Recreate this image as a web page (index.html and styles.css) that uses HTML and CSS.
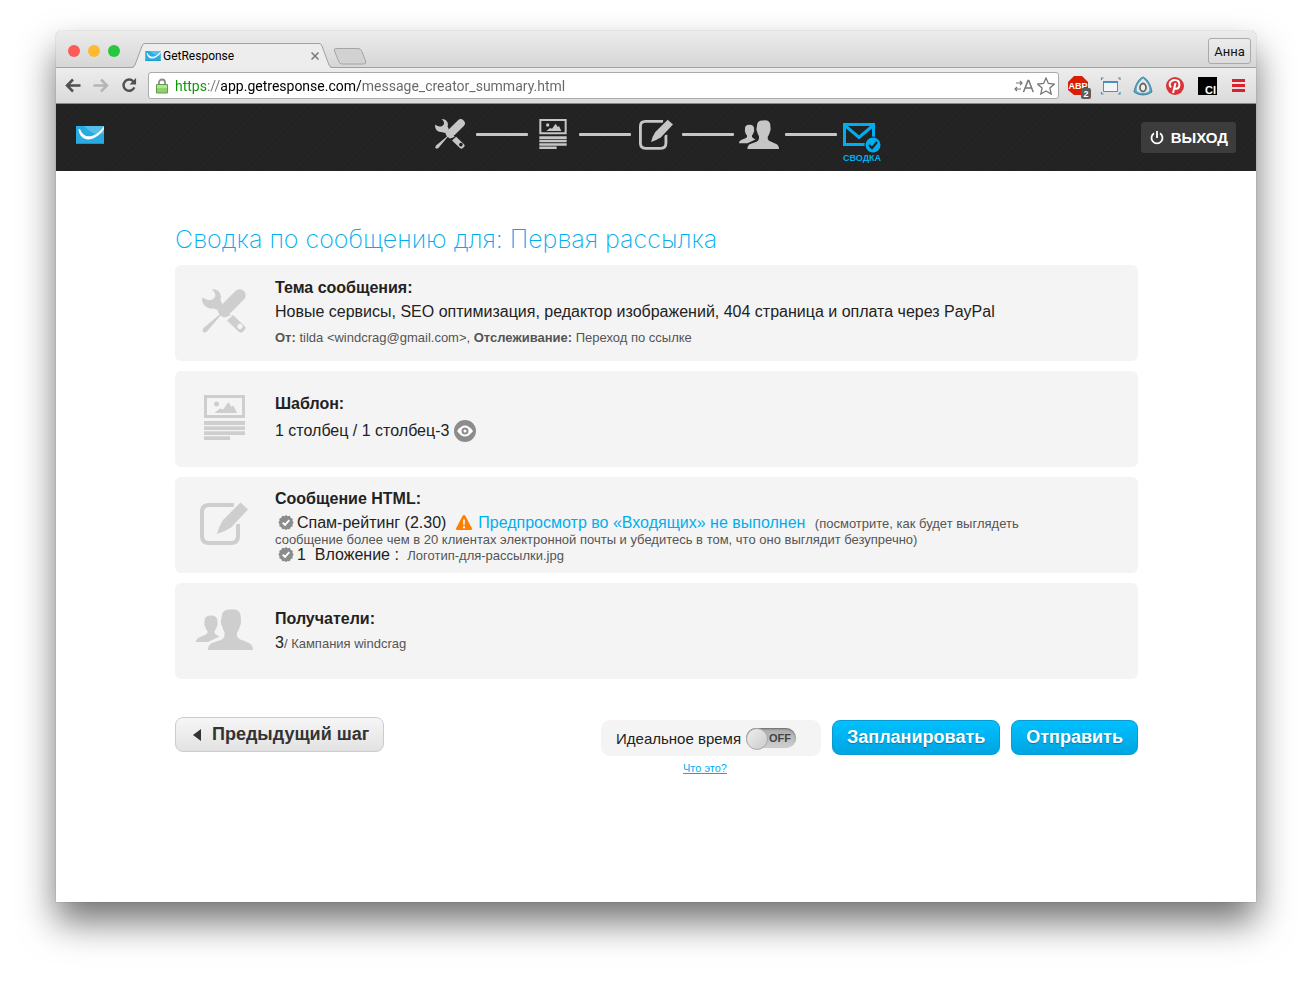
FILE: index.html
```html
<!DOCTYPE html>
<html lang="ru">
<head>
    <meta charset="UTF-8">
    <meta name="viewport" content="width=device-width, initial-scale=1.0">
    <title>GetResponse</title>
    <link rel="stylesheet" href="styles.css">
</head>
<body>
    <!-- shared icons -->
    <svg class="sprite" aria-hidden="true">
        <symbol id="tools" viewBox="0 0 44 44">
            <path fill="currentColor" d="M9.500.3C12.500 2.500 14.500 5.500 12.500 8.500 10 12 6 11.800.3 8.500-1 14.500 4 20 11.500 19.500L15.500 21 20.500 15.500 18.500 11C20.500 4 15.500-.5 9.500.3z"/>
            <path fill="none" stroke="currentColor" stroke-width="12" stroke-linecap="round" d="M37.700 6.300 25 19"/>
            <path fill="currentColor" d="M18 15 29 26 25.500 27.500 22 28.500 18.500 26.500 5 42.500 2.500 43.800.2 42 1.500 39 17.500 25.500 15.500 22z"/>
            <path fill="currentColor" fill-rule="evenodd" d="M31 26 42.500 37Q44.500 39 42.500 41L40.500 43Q38.500 44.500 36.500 42.500L25 31.500zM38 34.800a2.700 2.700 0 1 0 .01 0z"/>
        </symbol>
        <symbol id="template" viewBox="0 0 41 45">
            <path fill="none" stroke="currentColor" stroke-width="3" d="M1.500 1.500h38v20h-38z"/>
            <circle cx="12.500" cy="9" r="2.500" fill="currentColor"/>
            <path fill="currentColor" d="M10.500 18 16 13.500 19 14.500 24.500 7 27.500 12 29.500 10.500 33 18zM0 26h41v4H0zM0 31.300h41v3.700H0zM0 36.300h41v3.700H0zM0 41.300h26v3.700H0z"/>
        </symbol>
        <symbol id="edit" viewBox="0 0 48 43">
            <path fill="none" stroke="currentColor" stroke-width="4" d="M34 3H9Q2 3 2 10v24q0 7 7 7h22q7 0 7-7V22"/>
            <path fill="currentColor" stroke="var(--icon-back)" stroke-width="4" paint-order="stroke" d="M40.500.5 48 7.500 31 25.500Q24.500 30 17 32 19 24 23 18z"/>
        </symbol>
        <symbol id="people" viewBox="0 0 57 41">
            <path fill="currentColor" d="M8.500 13Q8 6.500 14.500 6.500 22 6 21.500 13.500 22 16 20.500 18.500 19.500 21 18.500 22V24Q20 26 23.500 27.500L12 33H0Q0 30 3 28.500L10 25.500Q12 24.500 11.500 22 9.500 20 9 17.500 8 16 8.500 13z"/>
            <path fill="currentColor" stroke="var(--icon-back)" stroke-width="2" paint-order="stroke" d="M25.500 9Q25.500 0 34 .5 45.500-1 44.800 10 45.500 14 44 17 43 21 41 23.500V27Q42 30 46 31L53 34Q57 36 57 41H12Q12 36 16 34L25 31Q28.500 29 28.500 26V23Q26.500 20 26 17 24 14 25.500 9z"/>
        </symbol>
        <symbol id="badge" viewBox="0 0 16 16">
            <path fill="currentColor" d="M8 0 9.800 1.200 12 .9 13 2.900 15.100 4 15 6.200 16 8 15 9.900 15.100 12 13 13.100 12 15.100 9.800 14.800 8 16 6.200 14.800 4 15.100 3 13.100.9 12 1 9.900 0 8 1 6.200.9 4 3 2.900 4 .9 6.200 1.200z"/>
            <path fill="none" stroke="#fff" stroke-width="2" d="M4.500 8.200 7 10.500 11.500 5.500"/>
        </symbol>
        <symbol id="gr" viewBox="0 0 28 18">
            <path fill="#28abe2" d="M0 0h28v18H0z"/>
            <path fill="#55bfe9" d="M8 0h20v7Q20 12 8 0z"/>
            <path fill="#fff" d="M2.500 3.500Q3.500 2.500 4.500 4C8 12.500 18 13.500 28 .5V3C18 17.500 4 16 2.500 3.500z"/>
            <path fill="#1e93ca" d="M0 17h28v1H0z"/>
        </symbol>
    </svg>

    <div class="window">
        <div class="titlebar">
            <div class="lights">
                <span class="light red"></span>
                <span class="light yellow"></span>
                <span class="light green"></span>
            </div>
            <div class="tab">
                <svg class="tab-edge" viewBox="0 0 14 25"><path fill="#ededed" d="M0 25C3 25 3 24 4 22L11 3Q12 0 14 0V25z"/><path fill="none" stroke="#a0a0a0" d="M0 24.500Q3 24.500 4 22L11 3Q12 .5 14 .5"/></svg>
                <div class="tab-body">
                    <svg class="favicon"><use href="#gr"/></svg>
                    <span class="tab-title">GetResponse</span>
                    <button class="tab-close" aria-label="Закрыть вкладку"><svg viewBox="0 0 8 8"><path stroke="#777" stroke-width="1.500" d="M.5.5l7 7M7.500.5l-7 7"/></svg></button>
                </div>
                <svg class="tab-edge" viewBox="0 0 14 25"><path fill="#ededed" d="M14 25C11 25 11 24 10 22L3 3Q2 0 0 0V25z"/><path fill="none" stroke="#a0a0a0" d="M14 24.500Q11 24.500 10 22L3 3Q2 .5 0 .5"/></svg>
            </div>
            <button class="new-tab" aria-label="Новая вкладка"><svg viewBox="0 0 34 17"><path fill="#d2d2d2" stroke="#a5a5a5" d="M3 .5H25Q27.500.5 28.500 2.500L32.500 13Q33.500 16 31 16H9Q7 16 6 14L1.500 3Q.5.5 3 .5z"/></svg></button>
            <button class="profile">Анна</button>
        </div>

        <div class="toolbar">
            <button class="tool" aria-label="Назад"><svg viewBox="0 0 16 14"><path fill="none" stroke="#505050" stroke-width="2.500" d="M15.500 7H2M8 1 2 7l6 6"/></svg></button>
            <button class="tool" aria-label="Вперёд"><svg viewBox="0 0 16 14"><path fill="none" stroke="#b5b5b5" stroke-width="2.500" d="M.5 7H14M8 1l6 6-6 6"/></svg></button>
            <button class="tool" aria-label="Обновить"><svg viewBox="0 0 16 16"><path fill="none" stroke="#505050" stroke-width="2.600" d="M12.500 3.500A6 6 0 1 0 13.700 10"/><path fill="#505050" d="M15.500 0v7H8.500z"/></svg></button>
            <div class="address">
                <svg class="lock" viewBox="0 0 12 16"><path fill="none" stroke="#8b8b8b" stroke-width="1.800" d="M3 8V4.500a3 3 0 0 1 6 0V8"/><path fill="#8fd16b" stroke="#5f9e47" d="M.5 6.500h11v8.500H.5z"/><path fill="#b4e496" d="M1 7h10v3H1z"/></svg>
                <input class="url" type="text" aria-label="Адрес" value="https://app.getresponse.com/message_creator_summary.html">
                <svg class="translate" viewBox="0 0 20 14"><path fill="none" stroke="#777" stroke-width="1.200" d="M2 4h6M6 2l2 2-2 2M7 10H1M3 8l-2 2 2 2"/><path fill="none" stroke="#777" stroke-width="1.500" d="M9.500 13 14 1.500h.8L19.200 13M11 9h6.800"/></svg>
                <svg class="star" viewBox="0 0 18 18"><path fill="#fff" stroke="#777" stroke-width="1.300" d="M9 1l2.400 5.500 6 .6-4.500 4 1.300 5.900L9 14l-5.200 3 1.300-5.900-4.500-4 6-.6z"/></svg>
            </div>
            <div class="extensions">
                <svg class="ext" viewBox="0 0 24 24"><path fill="#d81e05" d="M7 2h8l6 6v8l-6 5H7l-6-5V8z"/><text class="abp" x="11" y="15">ABP</text><rect x="14" y="14" width="10" height="11" rx="2" fill="#5c5c5c"/><text class="count" x="19" y="23">2</text></svg>
                <svg class="ext" viewBox="0 0 24 24"><path fill="none" stroke="#4b8fbd" stroke-width="1.200" d="M2.500 6V4h2M19 4h2v2M2.500 18v2h2M19 20h2v-2"/><path fill="#f1f5f8" stroke="#4b8fbd" d="M4.500 7.500h14v10h-14z"/><path fill="#4b8fbd" d="M4 7h15v2H4z"/></svg>
                <svg class="ext" viewBox="0 0 24 24"><path fill="#59a8c4" stroke="#3d839e" d="M12 3C17 5 20 12 21 18Q17 21 12 21T3 18C4 12 7 5 12 3z"/><path fill="#ddd" stroke="#e8eef0" stroke-width="1.500" d="M12 5.500Q18 11 17.500 16.500 12 20 6.500 16.500 6 11 12 5.500z"/><ellipse cx="12" cy="13.500" rx="3" ry="4" fill="#eee" stroke="#666" stroke-width="1.800"/></svg>
                <svg class="ext" viewBox="0 0 24 24"><circle cx="12" cy="12" r="9" fill="#d9343a"/><path fill="none" stroke="#fff" stroke-width="2" d="M8 13.500C4.500 9 9 5.500 12.500 6 17.500 6.500 17.500 14 13.500 14.800Q12 15 11.200 13.500M12.500 9 10 19"/></svg>
                <svg class="ext" viewBox="0 0 24 24"><path d="M3 3h19v18H3z"/><text class="ci" x="10" y="20">CI</text></svg>
                <svg class="ext" viewBox="0 0 24 24"><path fill="#d9222c" d="M5 5h13v3H5zM5 10h13v3H5zM5 15h13v3H5z"/></svg>
            </div>
        </div>

        <header class="header">
            <a href="#" class="logo" aria-label="GetResponse"><svg><use href="#gr"/></svg></a>
            <nav class="steps" aria-label="Шаги">
                <a href="#" class="step" aria-label="Настройки"><svg class="i-tools"><use href="#tools"/></svg></a>
                <span class="line"></span>
                <a href="#" class="step" aria-label="Шаблон"><svg class="i-template"><use href="#template"/></svg></a>
                <span class="line"></span>
                <a href="#" class="step" aria-label="Сообщение"><svg class="i-edit"><use href="#edit"/></svg></a>
                <span class="line"></span>
                <a href="#" class="step" aria-label="Получатели"><svg class="i-people"><use href="#people"/></svg></a>
                <span class="line"></span>
                <a href="#" class="step active">
                    <svg class="i-mail" viewBox="0 0 38 30"><path fill="none" stroke="currentColor" stroke-width="3" d="M1.500 1.500h29v20h-29zM2 2.500l14 12 14-12"/><circle cx="30" cy="22" r="8.500" fill="#232323"/><circle cx="30" cy="22" r="7.500" fill="currentColor"/><path fill="none" stroke="#232323" stroke-width="2.200" d="M26 22l3 3 5-6"/></svg>
                    <span>СВОДКА</span>
                </a>
            </nav>
            <button class="logout"><svg viewBox="0 0 14 14"><path fill="none" stroke="#fff" stroke-width="1.800" d="M4 2.300a5.500 5.500 0 1 0 6 0M7 0v7"/></svg>ВЫХОД</button>
        </header>

        <main class="content">
            <h1>Сводка по сообщению для: Первая рассылка</h1>

            <section class="card">
                <div class="card-icon"><svg class="i-tools"><use href="#tools"/></svg></div>
                <div class="card-text">
                    <h2>Тема сообщения:</h2>
                    <p>Новые сервисы, SEO оптимизация, редактор изображений, 404 страница и оплата через PayPal</p>
                    <p class="details"><b>От:</b> tilda &lt;windcrag@gmail.com&gt;, <b>Отслеживание:</b> Переход по ссылке</p>
                </div>
            </section>

            <section class="card">
                <div class="card-icon"><svg class="i-template"><use href="#template"/></svg></div>
                <div class="card-text">
                    <h2>Шаблон:</h2>
                    <p class="template-name">1 столбец / 1 столбец-3
                        <button class="preview" aria-label="Предпросмотр"><svg viewBox="0 0 22 22"><circle cx="11" cy="11" r="11" fill="#8c8c8c"/><path fill="#fff" d="M3 11Q7 5.500 11 5.500T19 11Q15 16.500 11 16.500T3 11z"/><circle cx="11" cy="11" r="3.500" fill="#8c8c8c"/><circle cx="11" cy="11" r="1.500" fill="#fff"/></svg></button>
                    </p>
                </div>
            </section>

            <section class="card">
                <div class="card-icon"><svg class="i-edit"><use href="#edit"/></svg></div>
                <div class="card-text">
                    <h2>Сообщение HTML:</h2>
                    <p class="checks">
                        <svg class="badge"><use href="#badge"/></svg><span>Спам-рейтинг (2.30)</span>
                        <svg class="warning" viewBox="0 0 16 15"><path fill="#ff7f00" d="M8 0Q9 0 9.500 1L16 13.500Q16 15 15 15H1Q0 15 0 13.500L6.500 1Q7 0 8 0z"/><path fill="#fff" d="M7 4.500h2l-.4 5.500H7.400zM7 11.200h2v2H7z"/></svg>
                        <a href="#">Предпросмотр во «Входящих» не выполнен</a>
                        <small>(посмотрите, как будет выглядеть сообщение более чем в 20 клиентах электронной почты и убедитесь в том, что оно выглядит безупречно)</small>
                    </p>
                    <p class="checks"><svg class="badge"><use href="#badge"/></svg><span>1 &nbsp;Вложение :</span> <small>Логотип-для-рассылки.jpg</small></p>
                </div>
            </section>

            <section class="card">
                <div class="card-icon"><svg class="i-people"><use href="#people"/></svg></div>
                <div class="card-text">
                    <h2>Получатели:</h2>
                    <p>3<small>/ Кампания windcrag</small></p>
                </div>
            </section>

            <div class="actions">
                <button class="prev"><svg viewBox="0 0 8 12"><path fill="#333" d="M8 0v12L0 6z"/></svg>Предыдущий шаг</button>
                <div class="timing">
                    <label class="timing-box">Идеальное время
                        <span class="switch"><input type="checkbox"><span>OFF</span></span>
                    </label>
                    <a href="#">Что это?</a>
                </div>
                <button class="primary">Запланировать</button>
                <button class="primary">Отправить</button>
            </div>
        </main>
    </div>
</body>
</html>
```
FILE: styles.css
```css
* {
    box-sizing: border-box;
}
body {
    --icon-back: #f4f4f4;
    margin: 0;
    padding: 31px 56px 80px;
    background-color: #fff;
    font-family: "Liberation Sans", Arial, sans-serif;
    font-size: 16px;
    color: #222;
}
button {
    font-family: inherit;
    padding: 0;
    border: none;
    background: none;
    cursor: pointer;
}
svg {
    display: block;
}
h1, h2, p {
    margin: 0;
}
a {
    color: #00aeef;
}
.sprite {
    position: absolute;
    width: 0;
    height: 0;
}
.window {
    min-height: calc(100vh - 111px);
    border-radius: 5px 5px 0 0;
    background-color: #fff;
    box-shadow: 0 0 1px rgba(0, 0, 0, 0.5), 0 20px 36px rgba(0, 0, 0, 0.55);
}

/* browser chrome */
.titlebar {
    display: flex;
    align-items: flex-end;
    height: 37px;
    padding: 4px 5px 0 12px;
    border-radius: 5px 5px 0 0;
    border-bottom: 1px solid #a0a0a0;
    background: linear-gradient(#ececec, #d6d6d6);
}
.lights {
    display: flex;
    align-self: center;
    gap: 8px;
    width: 63px;
}
.light {
    width: 12px;
    height: 12px;
    border-radius: 50%;
}
.red {
    background-color: #fc5b57;
}
.yellow {
    background-color: #fdbb2d;
}
.green {
    background-color: #27c73f;
}
.tab {
    display: flex;
    height: 25px;
    margin-bottom: -1px;
}
.tab-edge {
    width: 14px;
    height: 25px;
}
.tab-body {
    display: flex;
    align-items: center;
    width: 174px;
    border-top: 1px solid #a0a0a0;
    background-color: #ededed;
    font-family: Roboto, sans-serif;
    font-size: 12px;
    color: #000;
}
.favicon {
    width: 16px;
    height: 10px;
}
.tab-title {
    flex: 1;
    padding-left: 2px;
}
.tab-close svg {
    width: 8px;
    height: 8px;
}
.new-tab {
    margin-bottom: 2px;
}
.new-tab svg {
    width: 34px;
    height: 17px;
}
.profile {
    align-self: center;
    width: 43px;
    height: 26px;
    margin-left: auto;
    border: 1px solid #aaa;
    border-radius: 3px;
    background: linear-gradient(#ececec, #dcdcdc);
    font-family: Roboto, sans-serif;
    font-size: 13px;
    color: #111;
}
.toolbar {
    display: flex;
    align-items: center;
    gap: 12px;
    height: 36px;
    padding: 0 5px 0 9px;
    border-bottom: 1px solid #888;
    background: linear-gradient(#ededed, #dadada);
}
.tool svg {
    width: 16px;
    height: 15px;
}
.address {
    display: flex;
    flex: 1;
    align-items: center;
    gap: 3px;
    height: 27px;
    margin-left: -1px;
    padding: 0 3px 0 7px;
    border: 1px solid #aaa;
    border-radius: 3px;
    background-color: #fff;
}
.lock {
    width: 12px;
    height: 16px;
}
.url {
    flex: 1;
    min-width: 0;
    height: 24px;
    padding: 0;
    margin-left: 4px;
    border: none;
    outline: none;
    background: linear-gradient(90deg, #0a9500 33px, #777 33px, #777 46px, #000 46px, #000 187px, #666 187px);
    -webkit-background-clip: text;
    background-clip: text;
    -webkit-text-fill-color: transparent;
    font-family: Roboto, sans-serif;
    font-size: 14px;
}
.translate {
    width: 20px;
    height: 14px;
}
.star {
    width: 18px;
    height: 18px;
}
.extensions {
    display: flex;
    gap: 8px;
    margin-left: -4px;
}
.ext {
    width: 24px;
    height: 24px;
    overflow: visible;
}
.abp, .count, .ci {
    font-family: "Liberation Sans", sans-serif;
    font-weight: bold;
    fill: #fff;
}
.abp, .count {
    text-anchor: middle;
}
.abp {
    font-size: 9px;
}
.count {
    font-size: 9px;
}
.ci {
    font-size: 11px;
}

/* page header */
.header {
    --icon-back: #232323;
    display: grid;
    grid-template-columns: 1fr auto 1fr;
    align-items: center;
    height: 67px;
    padding: 0 20px;
    background: repeating-linear-gradient(135deg, #222 0 2px, #242424 2px 4px);
}
.logo svg {
    width: 28px;
    height: 18px;
    margin-bottom: 6px;
}
.steps {
    display: flex;
    align-self: start;
    padding-top: 13px;
}
.step {
    display: flex;
    flex-direction: column;
    align-items: center;
    justify-content: center;
    width: 51px;
    height: 34px;
    color: #c6c6c6;
    text-decoration: none;
}
.step .i-tools {
    width: 30px;
    height: 30px;
}
.step .i-template {
    width: 28px;
    height: 30px;
}
.step .i-edit {
    width: 34px;
    height: 31px;
}
.step .i-people {
    width: 40px;
    height: 29px;
}
.step .i-mail {
    width: 38px;
    height: 30px;
}
.step.active {
    height: 48px;
    padding-top: 3px;
    color: #00aeef;
    font-size: 9px;
    font-weight: bold;
    line-height: 10px;
}
.line {
    width: 52px;
    height: 3px;
    margin-top: 16px;
    border-radius: 1px;
    background-color: #c6c6c6;
}
.logout {
    display: flex;
    align-items: center;
    justify-self: end;
    gap: 7px;
    height: 31px;
    padding: 0 8px 0 9px;
    border-radius: 3px;
    background-color: #3c3c3c;
    font-size: 15px;
    font-weight: bold;
    color: #fff;
}
.logout svg {
    width: 14px;
    height: 14px;
}

/* summary */
.content {
    padding: 50px 118px 40px 119px;
}
h1 {
    margin-bottom: 8px;
    font-family: Inter, Roboto, sans-serif;
    font-size: 25px;
    font-weight: 200;
    line-height: 36px;
    color: #00aeef;
}
h2 {
    font-size: 16px;
    line-height: 24px;
}
.card {
    display: flex;
    align-items: center;
    min-height: 96px;
    margin-bottom: 10px;
    border-radius: 6px;
    background-color: #f4f4f4;
}
.card-icon {
    display: flex;
    justify-content: center;
    width: 100px;
    padding: 0 2px 4px 0;
    color: #cecece;
}
.card-icon .i-tools {
    width: 44px;
    height: 44px;
}
.card-icon .i-template {
    width: 41px;
    height: 45px;
}
.card-icon .i-edit {
    width: 48px;
    height: 43px;
}
.card-icon .i-people {
    width: 57px;
    height: 41px;
}
.card-text {
    flex: 1;
    padding-right: 90px;
    line-height: 24px;
}
.details, small {
    font-size: 13px;
    color: #555;
}
.details {
    padding-top: 2px;
}
.template-name {
    display: flex;
    align-items: center;
    gap: 5px;
    height: 30px;
}
.preview svg {
    width: 22px;
    height: 22px;
}
.checks {
    line-height: 16px;
}
.checks small {
    line-height: 12px;
}
h2 + .checks {
    padding-top: 4px;
}
.checks a {
    margin: 0 5px 0 2px;
    text-decoration: none;
}
.checks + .checks small {
    margin-left: 4px;
}
.badge, .warning {
    display: inline-block;
    width: 16px;
    height: 15px;
    vertical-align: -2px;
}
.badge {
    margin: 0 3px;
    color: #8c8c8c;
}
.warning {
    margin-left: 5px;
}
.actions {
    display: flex;
    align-items: flex-start;
    gap: 11px;
    padding-top: 31px;
}
.prev, .primary {
    height: 35px;
    border-radius: 8px;
    font-size: 18px;
    font-weight: bold;
}
.prev {
    display: flex;
    align-items: center;
    gap: 11px;
    margin: -3px auto 0 0;
    padding: 0 14px 0 17px;
    border: 1px solid #ccc;
    background: linear-gradient(#f6f6f6, #e2e2e2);
    color: #333;
}
.prev svg {
    width: 8px;
    height: 12px;
}
.primary {
    padding: 0 14px;
    border: 1px solid #0c9bd0;
    background: linear-gradient(#00c0ff, #00a5e2);
    color: #fff;
    text-shadow: 0 1px 1px rgba(0, 0, 0, 0.3);
}
.timing {
    text-align: center;
}
.timing a {
    display: block;
    padding-right: 12px;
    font-size: 11px;
    line-height: 24px;
}
.timing-box {
    display: flex;
    align-items: center;
    gap: 5px;
    height: 36px;
    padding: 0 25px 0 15px;
    border-radius: 9px;
    background-color: #f4f4f4;
    font-size: 15px;
}
.switch {
    position: relative;
    width: 50px;
    height: 20px;
}
.switch input {
    appearance: none;
    display: block;
    width: 50px;
    height: 20px;
    margin: 0;
    border-radius: 10px;
    background: linear-gradient(#aaa, #d0d0d0);
    box-shadow: inset 0 1px 2px rgba(0, 0, 0, 0.4);
}
.switch input::before {
    content: "";
    display: block;
    width: 20px;
    height: 20px;
    border: 1px solid #aaa;
    border-radius: 50%;
    background: linear-gradient(135deg, #eee, #ccc);
}
.switch span {
    position: absolute;
    top: 0;
    right: 5px;
    font-size: 11px;
    font-weight: bold;
    line-height: 20px;
    color: #444;
}
```
